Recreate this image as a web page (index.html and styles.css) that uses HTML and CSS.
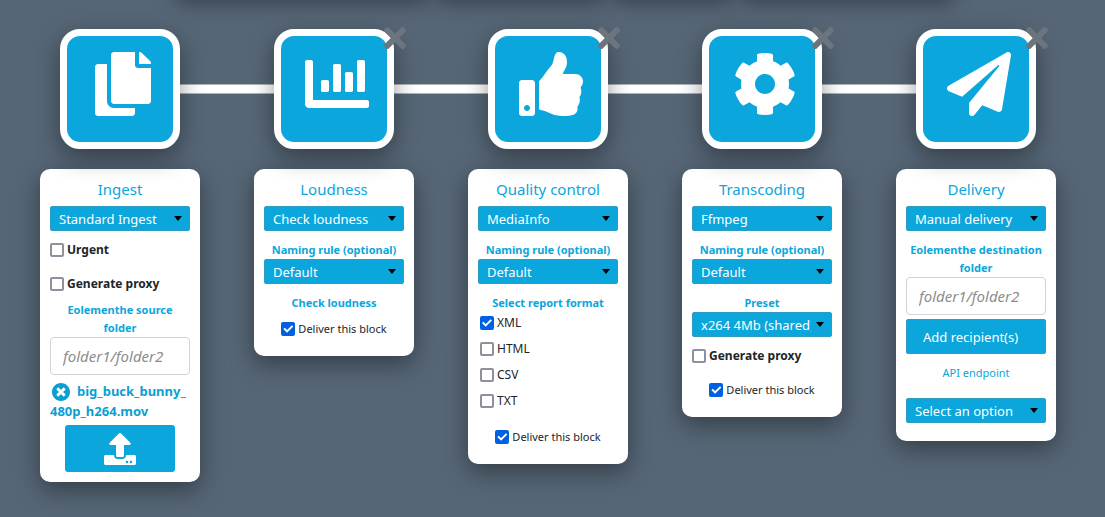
FILE: index.html
```html
<!DOCTYPE html>
<html lang="en">
<head>
<meta charset="utf-8">
<meta name="viewport" content="width=device-width, initial-scale=1">
<title>Workflow</title>
<link rel="stylesheet" href="styles.css">
</head>
<body>
<div class="shelf" aria-hidden="true">
  <div class="shelf-panel shelf-xl"></div>
  <div class="shelf-panel shelf-m"></div>
  <div class="shelf-panel shelf-s"></div>
  <div class="shelf-panel shelf-l"></div>
</div>
<main class="workflow">

  <section class="step">
    <div class="step-head">
      <span class="line line-hidden"></span>
      <div class="tile">
        <svg class="tile-icon" viewBox="0 0 448 512"><path d="M320 448v40c0 13.255-10.745 24-24 24H24c-13.255 0-24-10.745-24-24V120c0-13.255 10.745-24 24-24h72v296c0 30.879 25.121 56 56 56h168zm0-344V0H152c-13.255 0-24 10.745-24 24v368c0 13.255 10.745 24 24 24h272c13.255 0 24-10.745 24-24V128H344c-13.2 0-24-10.8-24-24zm120.971-31.029L375.029 7.029A24 24 0 0 0 358.059 0H352v96h96v-6.059a24 24 0 0 0-7.029-16.97z"/></svg>
      </div>
      <span class="line"></span>
    </div>
    <div class="card">
      <h2 class="title">Ingest</h2>
      <div class="select"><select aria-label="Ingest type"><option>Standard Ingest</option></select></div>
      <label class="check check-strong gap-m"><input type="checkbox">Urgent</label>
      <label class="check check-strong gap-l"><input type="checkbox">Generate proxy</label>
      <label class="label gap-s" for="source">Eolementhe source folder</label>
      <input class="text" id="source" type="text" placeholder="folder1/folder2">
      <p class="file"><button class="file-remove" type="button" aria-label="Remove file"><svg viewBox="8 8 496 496"><path d="M256 8C119 8 8 119 8 256s111 248 248 248 248-111 248-248S393 8 256 8zm121.6 313.1c4.7 4.7 4.7 12.3 0 17L338 377.6c-4.7 4.7-12.3 4.7-17 0L256 312l-65.1 65.6c-4.7 4.7-12.3 4.7-17 0L134.4 338c-4.7-4.7-4.7-12.3 0-17l65.6-65-65.6-65.1c-4.7-4.7-4.7-12.3 0-17l39.6-39.6c4.7-4.7 12.3-4.7 17 0l65 65.7 65.1-65.6c4.7-4.7 12.3-4.7 17 0l39.6 39.6c4.7 4.7 4.7 12.3 0 17L312 256l65.6 65.1z"/></svg></button>big_buck_bunny_<wbr>480p_h264.mov</p>
      <button class="upload" type="button" aria-label="Upload"><svg viewBox="0 0 512 512"><path d="M296 384h-80c-13.3 0-24-10.7-24-24V192h-87.7c-17.8 0-26.7-21.5-14.1-34.1L242.3 5.7c7.5-7.5 19.8-7.5 27.3 0l152.2 152.2c12.6 12.6 3.7 34.1-14.1 34.1H320v168c0 13.3-10.7 24-24 24zm216-8v112c0 13.3-10.7 24-24 24H24c-13.3 0-24-10.7-24-24V376c0-13.3 10.7-24 24-24h136v8c0 30.9 25.1 56 56 56h80c30.9 0 56-25.1 56-56v-8h136c13.3 0 24 10.7 24 24zm-124 88c0-11-9-20-20-20s-20 9-20 20 9 20 20 20 20-9 20-20zm64 0c0-11-9-20-20-20s-20 9-20 20 9 20 20 20 20-9 20-20z"/></svg></button>
    </div>
  </section>

  <section class="step">
    <div class="step-head">
      <span class="line"></span>
      <div class="tile">
        <svg class="tile-icon" viewBox="0 0 512 512"><path d="M332.8 320h38.4c6.4 0 12.8-6.4 12.8-12.8V172.8c0-6.4-6.4-12.8-12.8-12.8h-38.4c-6.4 0-12.8 6.4-12.8 12.8v134.4c0 6.4 6.4 12.8 12.8 12.8zm96 0h38.4c6.4 0 12.8-6.4 12.8-12.8V76.8c0-6.4-6.4-12.8-12.8-12.8h-38.4c-6.4 0-12.8 6.4-12.8 12.8v230.4c0 6.4 6.4 12.8 12.8 12.8zm-288 0h38.4c6.4 0 12.8-6.4 12.8-12.8v-70.4c0-6.4-6.4-12.8-12.8-12.8h-38.4c-6.4 0-12.8 6.4-12.8 12.8v70.4c0 6.4 6.4 12.8 12.8 12.8zm96 0h38.4c6.4 0 12.8-6.4 12.8-12.8V108.8c0-6.4-6.4-12.8-12.8-12.8h-38.4c-6.4 0-12.8 6.4-12.8 12.8v198.4c0 6.4 6.4 12.8 12.8 12.8zM496 384H64V80c0-8.84-7.16-16-16-16H16C7.16 64 0 71.16 0 80v336c0 17.67 14.33 32 32 32h464c8.84 0 16-7.16 16-16v-32c0-8.84-7.16-16-16-16z"/></svg>
        <button class="remove" type="button" aria-label="Remove Loudness"><svg viewBox="0 80 352 352"><path d="M242.72 256l100.07-100.07c12.28-12.28 12.28-32.19 0-44.48l-22.24-22.24c-12.28-12.28-32.19-12.28-44.48 0L176 189.28 75.93 89.21c-12.28-12.28-32.19-12.28-44.48 0L9.21 111.45c-12.28 12.28-12.28 32.19 0 44.48L109.28 256 9.21 356.07c-12.28 12.28-12.28 32.19 0 44.48l22.24 22.24c12.28 12.28 32.2 12.28 44.48 0L176 322.72l100.07 100.07c12.28 12.28 32.2 12.28 44.48 0l22.24-22.24c12.28-12.28 12.28-32.19 0-44.48L242.72 256z"/></svg></button>
      </div>
      <span class="line"></span>
    </div>
    <div class="card card-roomy">
      <h2 class="title">Loudness</h2>
      <div class="select"><select aria-label="Loudness tool"><option>Check loudness</option></select></div>
      <label class="label gap-m" for="loud-rule">Naming rule (optional)</label>
      <div class="select"><select id="loud-rule"><option>Default</option></select></div>
      <p class="label gap-m">Check loudness</p>
      <label class="check check-center gap-s"><input type="checkbox" checked>Deliver this block</label>
    </div>
  </section>

  <section class="step">
    <div class="step-head">
      <span class="line"></span>
      <div class="tile">
        <svg class="tile-icon" viewBox="0 0 512 512"><path d="M104 224H24c-13.255 0-24 10.745-24 24v240c0 13.255 10.745 24 24 24h80c13.255 0 24-10.745 24-24V248c0-13.255-10.745-24-24-24zM64 472c-13.255 0-24-10.745-24-24s10.745-24 24-24 24 10.745 24 24-10.745 24-24 24zM384 81.452c0 42.416-25.97 66.208-33.277 94.548h101.723c33.397 0 59.397 27.746 59.553 58.098.084 17.938-7.546 37.249-19.439 49.197l-.11.11c9.836 23.337 8.237 56.037-9.308 79.469 8.681 25.895-.069 57.704-16.382 74.757 4.298 17.598 2.244 32.575-6.148 44.632C440.202 511.587 389.616 512 346.839 512l-2.845-.001c-48.287-.017-87.806-17.598-119.56-31.725-15.957-7.099-36.821-15.887-52.651-16.178-6.54-.12-11.783-5.457-11.783-11.998v-213.77c0-3.2 1.282-6.271 3.558-8.521 39.614-39.144 56.648-80.587 89.117-113.111 14.804-14.832 20.188-37.236 25.393-58.902C282.515 39.293 291.817 0 312 0c24 0 72 8 72 81.452z"/></svg>
        <button class="remove" type="button" aria-label="Remove Quality control"><svg viewBox="0 80 352 352"><path d="M242.72 256l100.07-100.07c12.28-12.28 12.28-32.19 0-44.48l-22.24-22.24c-12.28-12.28-32.19-12.28-44.48 0L176 189.28 75.93 89.21c-12.28-12.28-32.19-12.28-44.48 0L9.21 111.45c-12.28 12.28-12.28 32.19 0 44.48L109.28 256 9.21 356.07c-12.28 12.28-12.28 32.19 0 44.48l22.24 22.24c12.28 12.28 32.2 12.28 44.48 0L176 322.72l100.07 100.07c12.28 12.28 32.2 12.28 44.48 0l22.24-22.24c12.28-12.28 12.28-32.19 0-44.48L242.72 256z"/></svg></button>
      </div>
      <span class="line"></span>
    </div>
    <div class="card card-roomy">
      <h2 class="title">Quality control</h2>
      <div class="select"><select aria-label="Quality control tool"><option>MediaInfo</option></select></div>
      <label class="label gap-m" for="qc-rule">Naming rule (optional)</label>
      <div class="select"><select id="qc-rule"><option>Default</option></select></div>
      <p class="label gap-m">Select report format</p>
      <div class="formats">
        <label class="check"><input type="checkbox" checked>XML</label>
        <label class="check"><input type="checkbox">HTML</label>
        <label class="check"><input type="checkbox">CSV</label>
        <label class="check"><input type="checkbox">TXT</label>
      </div>
      <label class="check check-center gap-l"><input type="checkbox" checked>Deliver this block</label>
    </div>
  </section>

  <section class="step">
    <div class="step-head">
      <span class="line"></span>
      <div class="tile">
        <svg class="tile-icon" viewBox="0 0 512 512"><path d="M487.4 315.7l-42.6-24.6c4.3-23.2 4.3-47 0-70.2l42.6-24.6c4.9-2.8 7.1-8.6 5.5-14-11.1-35.6-30-67.8-54.7-94.6-3.8-4.1-10-5.1-14.8-2.3L380.8 110c-17.9-15.4-38.5-27.3-60.8-35.1V25.8c0-5.6-3.9-10.5-9.4-11.7-36.7-8.2-74.3-7.8-109.2 0-5.5 1.2-9.4 6.1-9.4 11.7V75c-22.2 7.9-42.8 19.8-60.8 35.1L88.7 85.5c-4.9-2.8-11-1.9-14.8 2.3-24.7 26.7-43.6 58.9-54.7 94.6-1.7 5.4.6 11.2 5.5 14L67.3 221c-4.3 23.2-4.3 47 0 70.2l-42.6 24.6c-4.9 2.8-7.1 8.6-5.5 14 11.1 35.6 30 67.8 54.7 94.6 3.8 4.1 10 5.1 14.8 2.3l42.6-24.6c17.9 15.4 38.5 27.3 60.8 35.1v49.2c0 5.6 3.9 10.5 9.4 11.7 36.7 8.2 74.3 7.8 109.2 0 5.5-1.2 9.4-6.1 9.4-11.7v-49.2c22.2-7.9 42.8-19.8 60.8-35.1l42.6 24.6c4.9 2.8 11 1.9 14.8-2.3 24.7-26.7 43.6-58.9 54.7-94.6 1.5-5.5-.7-11.3-5.6-14.1zM256 336c-44.1 0-80-35.9-80-80s35.9-80 80-80 80 35.9 80 80-35.9 80-80 80z"/></svg>
        <button class="remove" type="button" aria-label="Remove Transcoding"><svg viewBox="0 80 352 352"><path d="M242.72 256l100.07-100.07c12.28-12.28 12.28-32.19 0-44.48l-22.24-22.24c-12.28-12.28-32.19-12.28-44.48 0L176 189.28 75.93 89.21c-12.28-12.28-32.19-12.28-44.48 0L9.21 111.45c-12.28 12.28-12.28 32.19 0 44.48L109.28 256 9.21 356.07c-12.28 12.28-12.28 32.19 0 44.48l22.24 22.24c12.28 12.28 32.2 12.28 44.48 0L176 322.72l100.07 100.07c12.28 12.28 32.2 12.28 44.48 0l22.24-22.24c12.28-12.28 12.28-32.19 0-44.48L242.72 256z"/></svg></button>
      </div>
      <span class="line"></span>
    </div>
    <div class="card card-roomy">
      <h2 class="title">Transcoding</h2>
      <div class="select"><select aria-label="Transcoding tool"><option>Ffmpeg</option></select></div>
      <label class="label gap-m" for="tc-rule">Naming rule (optional)</label>
      <div class="select"><select id="tc-rule"><option>Default</option></select></div>
      <label class="label gap-m" for="preset">Preset</label>
      <div class="select"><select id="preset"><option>x264 4Mb (shared)</option></select></div>
      <label class="check check-strong gap-m"><input type="checkbox">Generate proxy</label>
      <label class="check check-center gap-l"><input type="checkbox" checked>Deliver this block</label>
    </div>
  </section>

  <section class="step">
    <div class="step-head">
      <span class="line"></span>
      <div class="tile">
        <svg class="tile-icon" viewBox="0 0 512 512"><path d="M476 3.2L12.5 270.6c-18.1 10.4-15.8 35.6 2.2 43.2L121 358.4l287.3-253.2c5.5-4.9 13.3 2.6 8.6 8.3L176 407v80.5c0 23.6 28.5 32.9 42.5 15.8L282 426l124.6 52.2c14.2 6 30.4-2.9 33-18.2l72-432C515 7.8 493.3-6.8 476 3.2z"/></svg>
        <button class="remove" type="button" aria-label="Remove Delivery"><svg viewBox="0 80 352 352"><path d="M242.72 256l100.07-100.07c12.28-12.28 12.28-32.19 0-44.48l-22.24-22.24c-12.28-12.28-32.19-12.28-44.48 0L176 189.28 75.93 89.21c-12.28-12.28-32.19-12.28-44.48 0L9.21 111.45c-12.28 12.28-12.28 32.19 0 44.48L109.28 256 9.21 356.07c-12.28 12.28-12.28 32.19 0 44.48l22.24 22.24c12.28 12.28 32.2 12.28 44.48 0L176 322.72l100.07 100.07c12.28 12.28 32.2 12.28 44.48 0l22.24-22.24c12.28-12.28 12.28-32.19 0-44.48L242.72 256z"/></svg></button>
      </div>
      <span class="line line-hidden"></span>
    </div>
    <div class="card card-roomy">
      <h2 class="title">Delivery</h2>
      <div class="select"><select aria-label="Delivery type"><option>Manual delivery</option></select></div>
      <label class="label gap-m" for="destination">Eolementhe destination folder</label>
      <input class="text" id="destination" type="text" placeholder="folder1/folder2">
      <button class="add" type="button">Add recipient(s)</button>
      <label class="label label-light gap-m" for="endpoint">API endpoint</label>
      <div class="select gap-l"><select id="endpoint"><option>Select an option</option></select></div>
    </div>
  </section>

</main>
</body>
</html>
```
FILE: styles.css
```css
* {
  box-sizing: border-box;
}

:root {
  --blue: #0aa6dc;
  --slate: #566676;
  --shadow: 0 8px 24px rgba(0, 0, 0, 0.4);
}

body {
  margin: 0;
  min-height: 100vh;
  background: var(--slate);
  color: #212529;
  font-family: "Noto Sans", "Open Sans", sans-serif;
  font-size: 12px;
  line-height: 18px;
  overflow-x: hidden;
}

button,
select,
input {
  margin: 0;
  font: inherit;
}

button {
  padding: 0;
  border: 0;
  cursor: pointer;
}

svg {
  display: block;
  fill: currentColor;
}

/* Lower edge of the block picker above the workflow */
.shelf {
  display: flex;
  align-items: flex-start;
  justify-content: center;
  gap: 12px;
  height: 29px;
  padding-left: 24px;
}

.shelf-panel {
  height: 38px;
  margin-top: -40px;
  box-shadow: 0 4px 20px rgba(0, 0, 0, 0.4);
}

.shelf-xl {
  width: 250px;
}

.shelf-l {
  width: 210px;
}

.shelf-m {
  width: 164px;
}

.shelf-s {
  width: 116px;
}

.workflow {
  display: flex;
  padding: 0 13px 35px;
}

.step {
  flex: 0 0 214px;
}

.step-head {
  display: flex;
  align-items: center;
  margin-bottom: 20px;
}

.line {
  flex: 1;
  height: 10px;
  border: solid rgba(255, 255, 255, 0.5);
  border-width: 1px 0;
  background: #fff;
  background-clip: padding-box;
}

.line-hidden {
  visibility: hidden;
}

.tile {
  position: relative;
  display: flex;
  align-items: center;
  justify-content: center;
  width: 120px;
  height: 120px;
  padding: 0 0 10px 6px;
  border: 7px solid #fff;
  border-radius: 20px;
  background: var(--blue);
  color: #fff;
  box-shadow: var(--shadow);
}

.tile-icon {
  height: 64px;
}

.remove {
  position: absolute;
  top: -9px;
  right: -19px;
  width: 22px;
  background: none;
  color: #6c757d;
}

.card {
  display: flex;
  flex-direction: column;
  margin: 0 27px;
  padding: 10px;
  border-radius: 10px;
  background: #fff;
  box-shadow: var(--shadow);
}

.card-roomy {
  padding-bottom: 18px;
}

.title {
  margin: 0 0 7px;
  color: var(--blue);
  font-size: 15px;
  font-weight: 400;
  line-height: 20px;
  text-align: center;
}

.gap-s {
  margin-top: 8px;
}

.gap-m {
  margin-top: 10px;
}

.gap-l {
  margin-top: 16px;
}

.select {
  display: grid;
  align-items: center;
}

.select > select,
.select::after {
  grid-area: 1 / 1;
}

.select > select {
  appearance: none;
  width: 100%;
  min-width: 0;
  height: 25px;
  padding: 0 20px 0 8px;
  border: 1px solid #2f9cc4;
  border-radius: 2px;
  background: var(--blue);
  color: #fff;
  font-size: 13px;
}

.select::after {
  content: "";
  z-index: 1;
  justify-self: end;
  width: 8px;
  height: 5px;
  margin-right: 8px;
  background: #000;
  clip-path: polygon(0 0, 100% 0, 50% 100%);
  pointer-events: none;
}

.label {
  margin-bottom: 0;
  color: var(--blue);
  font-size: 11px;
  font-weight: 700;
  text-align: center;
}

.label-light {
  font-weight: 400;
}

.check {
  display: flex;
  align-items: center;
  gap: 3px;
}

.check-strong {
  font-weight: 700;
}

.check-center {
  justify-content: center;
  font-size: 11px;
}

.check input {
  appearance: none;
  display: grid;
  place-items: center;
  flex: none;
  width: 14px;
  height: 14px;
  border: 2px solid #8f8f9d;
  border-radius: 2px;
  background: #fff;
}

.check input:checked {
  border-color: #0060df;
  background: #0060df;
}

.check input:checked::before {
  content: "";
  width: 10px;
  height: 8px;
  background: #fff;
  clip-path: polygon(0 50%, 14% 34%, 37% 62%, 86% 2%, 100% 18%, 37% 98%);
}

.formats {
  display: flex;
  flex-direction: column;
  gap: 8px;
  padding: 2px;
}

.text {
  width: 100%;
  height: 38px;
  padding: 0 12px;
  border: 1px solid #ced4da;
  border-radius: 4px;
  background: #fff;
  color: #495057;
  font-size: 15px;
}

.text::placeholder {
  color: #8c8c8c;
  font-style: italic;
}

.file {
  margin: 6px 0 4px;
  color: #0a9fd2;
  font-size: 13px;
  font-weight: 700;
  line-height: 20px;
  white-space: nowrap;
}

.file-remove {
  width: 18px;
  margin: 0 7px 0 2px;
  background: none;
  color: inherit;
  vertical-align: middle;
}

.upload {
  display: grid;
  place-items: center;
  align-self: center;
  width: 110px;
  height: 47px;
  border-radius: 3px;
  background: var(--blue);
  color: #fff;
}

.upload svg {
  width: 32px;
}

.add {
  height: 35px;
  margin-top: 4px;
  padding: 0 16px;
  border: 1px solid #2f9cc4;
  border-radius: 2px;
  background: var(--blue);
  color: #fff;
  font-size: 13px;
  text-align: left;
}
```
